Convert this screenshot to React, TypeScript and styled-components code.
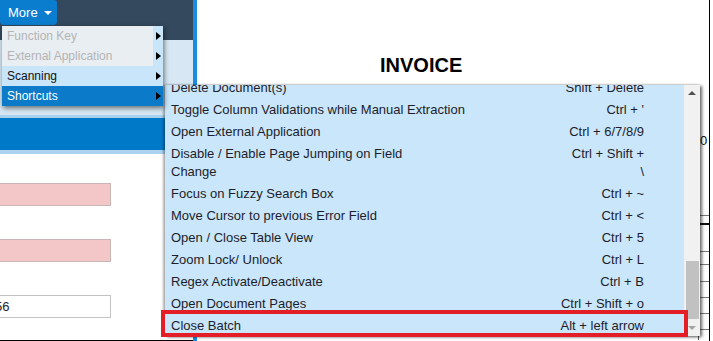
import React from "react";
import styled, { createGlobalStyle } from "styled-components";

interface Shortcut {
  label: React.ReactNode;
  keys: React.ReactNode;
}

const shortcuts: Shortcut[] = [
  { label: "Delete Document(s)", keys: "Shift + Delete" },
  { label: "Toggle Column Validations while Manual Extraction", keys: "Ctrl + '" },
  { label: "Open External Application", keys: "Ctrl + 6/7/8/9" },
  {
    label: (
      <>
        Disable / Enable Page Jumping on Field
        <br />
        Change
      </>
    ),
    keys: (
      <>
        Ctrl + Shift +
        <br />\
      </>
    ),
  },
  { label: "Focus on Fuzzy Search Box", keys: "Ctrl + ~" },
  { label: "Move Cursor to previous Error Field", keys: "Ctrl + <" },
  { label: "Open / Close Table View", keys: "Ctrl + 5" },
  { label: "Zoom Lock/ Unlock", keys: "Ctrl + L" },
  { label: "Regex Activate/Deactivate", keys: "Ctrl + B" },
  { label: "Open Document Pages", keys: "Ctrl + Shift + o" },
  { label: "Close Batch", keys: "Alt + left arrow" },
];

const menuItems = [
  { label: "Function Key", state: "disabled" },
  { label: "External Application", state: "disabled" },
  { label: "Scanning", state: "hover" },
  { label: "Shortcuts", state: "active" },
] as const;

type ItemState = "disabled" | "hover" | "active";

// row heights of the invoice table peeking out on the right
const stubRows = [7, 26, 12, 16, 15, 15, 15, 10];

const GlobalStyle = createGlobalStyle`
  html, body {
    margin: 0;
    padding: 0;
    background: #fff;
    overflow: hidden;
  }
  body {
    font-family: "Liberation Sans", Arial, sans-serif;
    font-size: 13px;
    color: #1c1c2a;
  }
`;

const Page = styled.div`
  position: relative;
  width: 713px;
  height: 341px;
  display: flex;
  overflow: hidden;
`;

const LeftPanel = styled.div`
  width: 193px;
  display: flex;
  flex-direction: column;
  background: #fff;
`;

const Header = styled.div`
  height: 40px;
  background: #34495e;
`;

const MoreButton = styled.div`
  width: 57px;
  height: 25px;
  background: #0b7dcf;
  border-radius: 0 3px 4px 4px;
  color: #fff;
  font-size: 13px;
  display: flex;
  align-items: center;
  gap: 6px;
  padding-left: 8px;
  box-sizing: border-box;
`;

const Caret = styled.span`
  width: 0;
  height: 0;
  border-left: 4px solid transparent;
  border-right: 4px solid transparent;
  border-top: 4px solid #fff;
  margin-top: 1px;
`;

const SubHeader = styled.div`
  height: 75px;
  background: #d7e8f4;
  border-bottom: 3px solid #aad2ef;
`;

const BlueBar = styled.div`
  height: 32px;
  background: #0079c9;
  border-bottom: 4px solid #abd2ef;
`;

const Form = styled.div`
  flex: 1;
  display: flex;
  flex-direction: column;
  gap: 33px;
  padding-top: 29px;
`;

const Field = styled.div<{ $error?: boolean }>`
  width: 111px;
  height: 23px;
  box-sizing: border-box;
  border: 1px solid ${(p) => (p.$error ? "#c9b5b5" : "#c3c3c3")};
  border-left: none;
  background: ${(p) => (p.$error ? "#f3c7c7" : "#fff")};
  font-size: 13px;
  line-height: 21px;
  text-indent: -5px;
  overflow: hidden;
`;

const BottomRule = styled.div`
  margin-top: 16px;
  height: 1px;
  background: #000;
`;

const Separator = styled.div`
  width: 4px;
  background: #1a8de0;
`;

const DocArea = styled.div`
  width: 512px;
  border-right: 1px solid #000;
  background: #fff;
  display: flex;
  flex-direction: column;
`;

const Title = styled.h1`
  margin: 54px 0 0 183px;
  font-size: 20px;
  font-weight: bold;
  line-height: 23px;
  color: #000;
`;

const TableStub = styled.div`
  margin: 56px 0 0 auto;
  width: 10px;
  display: flex;
  flex-direction: column;
  border-left: 1px solid #555;
`;

const StubText = styled.div`
  height: 82px;
  font-size: 13px;
  line-height: 16px;
  padding-left: 1px;
  color: #111;
`;

const StubRow = styled.div<{ $bold?: boolean }>`
  border-top: ${(p) => (p.$bold ? "2px solid #111" : "1px solid #777")};
`;

const Dropdown = styled.div`
  position: absolute;
  left: 2px;
  top: 26px;
  width: 161px;
  background: #c9e5fa;
  box-shadow: 1px 2px 5px rgba(0, 0, 0, 0.55);
  z-index: 3;
`;

const MenuItem = styled.div<{ $state: ItemState }>`
  height: 20px;
  display: flex;
  align-items: center;
  font-size: 12px;
  background: ${(p) => (p.$state === "active" ? "#0a7ac9" : "transparent")};
  color: ${(p) =>
    p.$state === "disabled" ? "#b4b4b4" : p.$state === "active" ? "#fff" : "#111"};
`;

const MenuLabel = styled.span<{ $state: ItemState }>`
  flex: 1;
  height: 100%;
  line-height: 20px;
  padding-left: 5px;
  background: ${(p) => (p.$state === "disabled" ? "#e9eef2" : "transparent")};
`;

const SubArrow = styled.span`
  width: 10px;
  display: flex;
  justify-content: center;
  &::before {
    content: "";
    border-top: 4.5px solid transparent;
    border-bottom: 4.5px solid transparent;
    border-left: 5px solid #000;
  }
`;

const Popup = styled.div`
  position: absolute;
  left: 165px;
  top: 85px;
  width: 535px;
  height: 251px;
  display: flex;
  background: #c9e6fb;
  box-shadow: -2px 0 2px rgba(0, 0, 0, 0.3), 2px 1px 3px rgba(0, 0, 0, 0.6);
  z-index: 2;
`;

const List = styled.div`
  flex: 1;
  overflow: hidden;
`;

const ListInner = styled.div`
  margin-top: -8px;
`;

const Row = styled.div`
  display: flex;
  justify-content: space-between;
  padding: 2px 40px 2px 6px;
  line-height: 18px;
  white-space: nowrap;
  color: #1d1d2b;
`;

const Keys = styled.span`
  text-align: right;
`;

const Scrollbar = styled.div`
  width: 16px;
  background: #f1f1f1;
  display: flex;
  flex-direction: column;
`;

const ScrollButton = styled.div<{ $down?: boolean }>`
  height: 16px;
  display: flex;
  align-items: center;
  justify-content: center;
  &::before {
    content: "";
    border-left: 4px solid transparent;
    border-right: 4px solid transparent;
    ${(p) =>
      p.$down
        ? "border-top: 4px solid #a3a3a3;"
        : "border-bottom: 4px solid #505050;"}
  }
`;

const Track = styled.div`
  flex: 1;
  display: flex;
  flex-direction: column;
  justify-content: flex-end;
  padding: 0 1px 1px 2px;
`;

const Thumb = styled.div`
  height: 58px;
  background: #c1c1c1;
`;

const Highlight = styled.div`
  position: absolute;
  left: 161px;
  top: 310px;
  width: 527px;
  height: 27px;
  box-sizing: border-box;
  border: 4px solid #e31e26;
  z-index: 4;
`;

export default function App() {
  return (
    <>
      <GlobalStyle />
      <Page>
        <LeftPanel>
          <Header>
            <MoreButton>
              More <Caret />
            </MoreButton>
          </Header>
          <SubHeader />
          <BlueBar />
          <Form>
            <Field $error />
            <Field $error />
            <Field>56</Field>
          </Form>
          <BottomRule />
        </LeftPanel>
        <Separator />
        <DocArea>
          <Title>INVOICE</Title>
          <TableStub>
            <StubText>0</StubText>
            {stubRows.map((h, i) => (
              <StubRow key={i} $bold={i === 1} style={{ height: h }} />
            ))}
          </TableStub>
        </DocArea>

        <Dropdown>
          {menuItems.map((item) => (
            <MenuItem key={item.label} $state={item.state}>
              <MenuLabel $state={item.state}>{item.label}</MenuLabel>
              <SubArrow />
            </MenuItem>
          ))}
        </Dropdown>

        <Popup>
          <List>
            <ListInner>
              {shortcuts.map((s, i) => (
                <Row key={i}>
                  <span>{s.label}</span>
                  <Keys>{s.keys}</Keys>
                </Row>
              ))}
            </ListInner>
          </List>
          <Scrollbar>
            <ScrollButton />
            <Track>
              <Thumb />
            </Track>
            <ScrollButton $down />
          </Scrollbar>
        </Popup>

        <Highlight />
      </Page>
    </>
  );
}
